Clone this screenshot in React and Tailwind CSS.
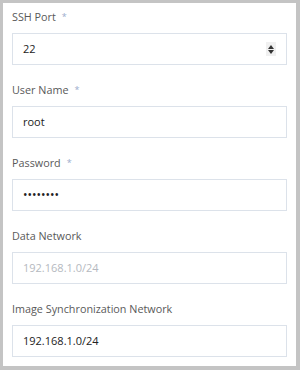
const fields = [
  { label: 'SSH Port', required: true, value: '22', type: 'number' },
  { label: 'User Name', required: true, value: 'root' },
  { label: 'Password', required: true, value: '••••••••', type: 'password' },
  { label: 'Data Network', placeholder: '192.168.1.0/24' },
  { label: 'Image Synchronization Network', value: '192.168.1.0/24' },
]

function Spinner() {
  return (
    <div className="flex h-[14px] w-[10px] flex-col items-center justify-center gap-[1px] bg-[#f0f0f0]">
      <svg width="6" height="4" viewBox="0 0 6 4">
        <path d="M3 0L6 4H0z" fill="#333" />
      </svg>
      <svg width="6" height="4" viewBox="0 0 6 4">
        <path d="M0 0h6L3 4z" fill="#333" />
      </svg>
    </div>
  )
}

export default function App() {
  return (
    <div
      className="h-[370px] w-[300px] bg-[#c4c4c4] pb-[4px] pl-[3px] pr-[4px] pt-[3px]"
      style={{ fontFamily: '"Open Sans", "Noto Sans", sans-serif' }}
    >
      <div className="flex h-full flex-col bg-white px-[9px] pt-[3px]">
        {fields.map((f, i) => (
          <div key={i} className="mb-[14px] flex flex-col">
            <div className="flex h-[22px] items-center text-[10.8px] text-[#595959]">
              {f.label}
              {f.required && <span className="ml-[6px] text-[9px] text-[#9aaccc]">*</span>}
            </div>
            <div className="mt-[5px] flex h-[32px] items-center justify-between border border-[#dce2ea] px-[10px] text-[11px]">
              {f.value ? (
                <span className={f.type === 'password' ? 'text-[12px] text-[#222]' : 'text-[#222]'}>{f.value}</span>
              ) : (
                <span className="text-[#b5b9c0]">{f.placeholder}</span>
              )}
              {f.type === 'number' && <Spinner />}
            </div>
          </div>
        ))}
      </div>
    </div>
  )
}
